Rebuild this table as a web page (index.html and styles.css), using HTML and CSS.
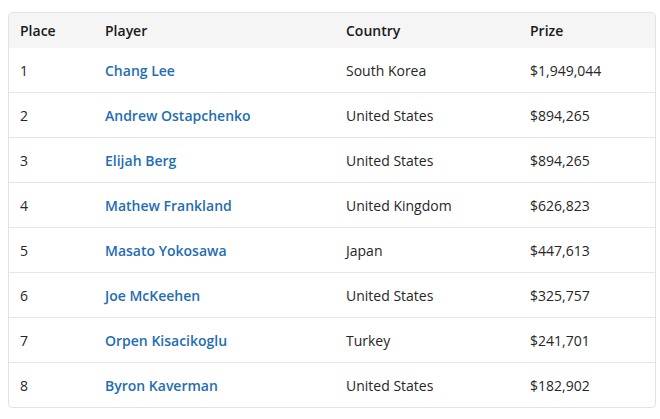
FILE: index.html
```html
<!DOCTYPE html>
<html>
<head>
<meta charset="utf-8">
<link rel="stylesheet" href="styles.css">
</head>
<body>
<div class="wrap">
<table class="results">
  <colgroup>
    <col class="c-place"><col class="c-player"><col class="c-country"><col class="c-prize">
  </colgroup>
  <thead>
    <tr><th>Place</th><th>Player</th><th>Country</th><th>Prize</th></tr>
  </thead>
  <tbody>
    <tr><td>1</td><td><a href="#">Chang Lee</a></td><td>South Korea</td><td>$1,949,044</td></tr>
    <tr><td>2</td><td><a href="#">Andrew Ostapchenko</a></td><td>United States</td><td>$894,265</td></tr>
    <tr><td>3</td><td><a href="#">Elijah Berg</a></td><td>United States</td><td>$894,265</td></tr>
    <tr><td>4</td><td><a href="#">Mathew Frankland</a></td><td>United Kingdom</td><td>$626,823</td></tr>
    <tr><td>5</td><td><a href="#">Masato Yokosawa</a></td><td>Japan</td><td>$447,613</td></tr>
    <tr><td>6</td><td><a href="#">Joe McKeehen</a></td><td>United States</td><td>$325,757</td></tr>
    <tr><td>7</td><td><a href="#">Orpen Kisacikoglu</a></td><td>Turkey</td><td>$241,701</td></tr>
    <tr><td>8</td><td><a href="#">Byron Kaverman</a></td><td>United States</td><td>$182,902</td></tr>
  </tbody>
</table>
</div>
</body>
</html>
```
FILE: styles.css
```css
html, body { margin: 0; padding: 0; background: #fff; }
body { font-family: "Open Sans", "Liberation Sans", sans-serif; font-size: 14px; color: #222; }
.wrap { padding: 12px 6px 0 8px; }
.results {
  width: 646px;
  border-collapse: separate;
  border-spacing: 0;
  border: 1px solid #e3e3e3;
  border-radius: 4px;
  overflow: hidden;
  table-layout: fixed;
}
.c-place { width: 85px; }
.c-player { width: 241px; }
.c-country { width: 184px; }
.c-prize { width: 136px; }
.results th {
  background: #f5f5f5;
  text-align: left;
  font-weight: 600;
  height: 35px;
  padding: 0 11px;
  color: #1a1a1a;
}
.results td {
  height: 44px;
  padding: 0 11px;
  border-top: 1px solid #e6e6e6;
  color: #262626;
}
.results tbody tr:first-child td { border-top: 0; height: 44px; }
.results a {
  color: #1f6db3;
  font-weight: 600;
  text-decoration: none;
}
```
